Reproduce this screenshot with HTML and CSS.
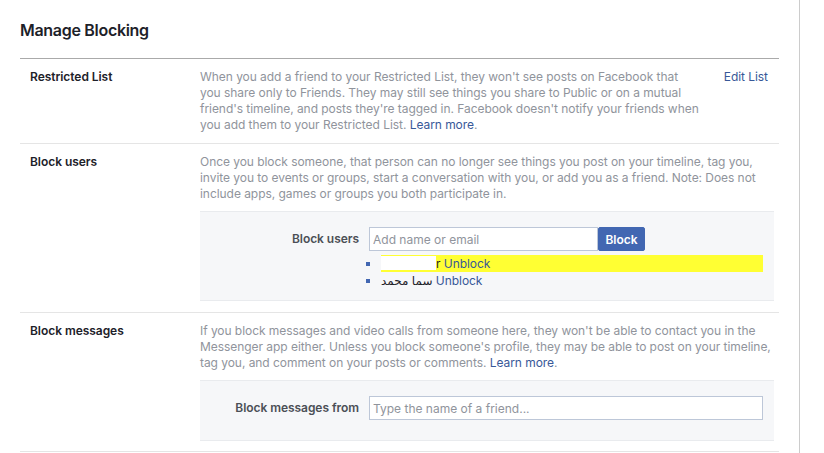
FILE: index.html
```html
<!DOCTYPE html>
<html lang="en">
<head>
    <meta charset="UTF-8">
    <meta name="viewport" content="width=device-width, initial-scale=1.0">
    <title>Manage Blocking</title>
    <link rel="stylesheet" href="styles.css">
</head>
<body>
    <div class="settings">
        <h2 class="title">Manage Blocking</h2>

        <div class="section">
            <div class="row">
                <div class="row-label">Restricted List</div>
                <div class="row-body">
                    When you add a friend to your Restricted List, they won't see posts on Facebook that you share only to Friends. They may still see things you share to Public or on a mutual friend's timeline, and posts they're tagged in. Facebook doesn't notify your friends when you add them to your Restricted List. <a href="#">Learn more</a>.
                </div>
                <div class="row-action"><a href="#">Edit List</a></div>
            </div>

            <div class="row">
                <div class="row-label">Block users</div>
                <div class="row-body wide">
                    Once you block someone, that person can no longer see things you post on your timeline, tag you, invite you to events or groups, start a conversation with you, or add you as a friend. Note: Does not include apps, games or groups you both participate in.

                    <div class="panel">
                        <div class="field">
                            <label class="field-label" for="blockUser">Block users</label>
                            <input type="text" id="blockUser" class="text-input short" placeholder="Add name or email">
                            <button class="btn-block">Block</button>
                        </div>
                        <ul class="blocked-list">
                            <li class="highlight"><span class="redact"></span>r <a href="#">Unblock</a></li>
                            <li>سما محمد <a href="#">Unblock</a></li>
                        </ul>
                    </div>
                </div>
            </div>

            <div class="row">
                <div class="row-label">Block messages</div>
                <div class="row-body wide">
                    If you block messages and video calls from someone here, they won't be able to contact you in the Messenger app either. Unless you block someone's profile, they may be able to post on your timeline, tag you, and comment on your posts or comments. <a href="#">Learn more</a>.

                    <div class="panel tall">
                        <div class="field">
                            <label class="field-label" for="blockMessages">Block messages from</label>
                            <input type="text" id="blockMessages" class="text-input long" placeholder="Type the name of a friend...">
                        </div>
                    </div>
                </div>
            </div>
        </div>
    </div>
</body>
</html>
```

FILE: styles.css
```css
body {
    margin: 0;
    font-family: Inter, "Liberation Sans", "DejaVu Sans", sans-serif;
    font-size: 12px;
    line-height: 16px;
    letter-spacing: -0.05px;
    color: #1d2129;
    background-color: #fff;
}

a {
    color: #385898;
    text-decoration: none;
}

.settings {
    width: 759px;
    padding: 0 20px;
    min-height: 100vh;
    border-right: 1px solid #ccc;
}

.title {
    margin: 0;
    padding: 20px 0 18px;
    font-size: 16px;
    line-height: 20px;
    font-weight: 600;
    letter-spacing: -0.3px;
    color: #1d2129;
}

.section {
    border-top: 1px solid #aaa;
    border-bottom: 1px solid #e5e5e5;
}

.row {
    display: grid;
    grid-template-columns: 170px 500px 1fr;
    padding: 10px 3px 10px 10px;
    border-top: 1px solid #e5e5e5;
}

.row:first-child {
    border-top: none;
}

.row:last-child {
    padding-bottom: 9px;
}

.row-label {
    font-weight: 600;
}

.row-body {
    color: #90949c;
}

.row-body.wide {
    grid-column: 2 / 4;
}

.row-action {
    text-align: right;
    padding-right: 8px;
}

.panel {
    margin: 9px 2px 1px 0;
    padding: 15px 0 11px;
    background-color: #f6f7f9;
    border-top: 1px solid #e9ebee;
    border-bottom: 1px solid #e9ebee;
    color: #1d2129;
}

.panel.tall {
    padding-bottom: 20px;
}

.field {
    display: flex;
    align-items: center;
}

.field-label {
    width: 159px;
    margin-right: 10px;
    text-align: right;
    font-weight: 600;
    color: #4b4f56;
}

.text-input {
    box-sizing: border-box;
    height: 24px;
    padding: 0 3px;
    border: 1px solid #bdc7d8;
    font-family: inherit;
    font-size: 12px;
    color: #1d2129;
    outline: none;
}

.text-input::placeholder {
    color: #90949c;
}

.text-input.short {
    width: 229px;
}

.text-input.long {
    width: 394px;
}

.btn-block {
    box-sizing: border-box;
    height: 24px;
    width: 47px;
    padding: 0;
    border: 1px solid #4267b2;
    border-radius: 2px;
    background-color: #4267b2;
    color: #fff;
    font-family: inherit;
    font-size: 12px;
    font-weight: 600;
}

.blocked-list {
    width: 382px;
    margin: 4px 0 0 181px;
    padding: 0;
    list-style: square;
}

.blocked-list li {
    line-height: 17px;
}

.blocked-list li::marker {
    color: #4267b2;
}

.blocked-list .highlight {
    background-color: #ffff33;
}

.redact {
    display: inline-block;
    width: 55px;
    height: 14px;
    vertical-align: -2px;
    background-color: #fff;
}
```
